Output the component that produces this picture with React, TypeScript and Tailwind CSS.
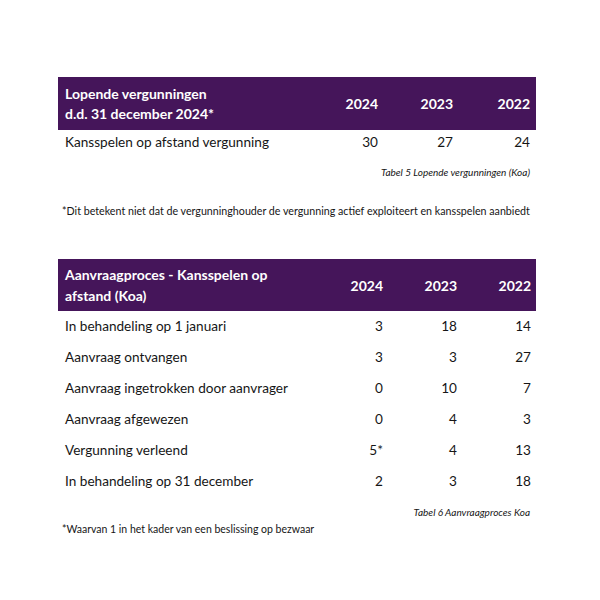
const rows2: [string, string, string, string][] = [
  ["In behandeling op 1 januari", "3", "18", "14"],
  ["Aanvraag ontvangen", "3", "3", "27"],
  ["Aanvraag ingetrokken door aanvrager", "0", "10", "7"],
  ["Aanvraag afgewezen", "0", "4", "3"],
  ["Vergunning verleend", "5*", "4", "13"],
  ["In behandeling op 31 december", "2", "3", "18"],
];

const App = () => {
  return (
    <div className="h-[600px] w-[600px] bg-white font-['Lato',sans-serif] text-[#161616]">
      <div className="ml-[58px] w-[478px] pt-[77px]">
        {/* Tabel 5 */}
        <div className="grid h-[53px] grid-cols-[1fr_70px_75px_77px] items-center bg-[#45155a] pl-[7px] pr-[6px] text-[14px] font-bold leading-[20px] text-white">
          <div>
            Lopende vergunningen
            <br />
            d.d. 31 december 2024*
          </div>
          <div className="text-right">2024</div>
          <div className="text-right">2023</div>
          <div className="text-right">2022</div>
        </div>
        <div className="grid h-[25px] grid-cols-[1fr_70px_75px_77px] items-center pl-[7px] pr-[6px] text-[13.6px]">
          <div>Kansspelen op afstand vergunning</div>
          <div className="text-right">30</div>
          <div className="text-right">27</div>
          <div className="text-right">24</div>
        </div>
        <div className="mt-[10px] pr-[6px] text-right text-[10px] italic">
          Tabel 5 Lopende vergunningen (Koa)
        </div>
        <div className="mt-[23px] pl-[4px] text-[10.7px]">
          *Dit betekent niet dat de vergunninghouder de vergunning actief exploiteert en kansspelen aanbiedt
        </div>

        {/* Tabel 6 */}
        <div className="mt-[40px] grid h-[52px] grid-cols-[1fr_70px_74px_74px] items-center bg-[#45155a] pl-[7px] pr-[5px] text-[14px] font-bold leading-[21px] text-white">
          <div>
            Aanvraagproces - Kansspelen op
            <br />
            afstand (Koa)
          </div>
          <div className="text-right">2024</div>
          <div className="text-right">2023</div>
          <div className="text-right">2022</div>
        </div>
        <div className="flex flex-col">
          {rows2.map((r) => (
            <div
              key={r[0]}
              className="grid h-[31px] grid-cols-[1fr_70px_74px_74px] items-center pl-[7px] pr-[5px] text-[13.6px]"
            >
              <div>{r[0]}</div>
              <div className="text-right">{r[1]}</div>
              <div className="text-right">{r[2]}</div>
              <div className="text-right">{r[3]}</div>
            </div>
          ))}
        </div>
        <div className="mt-[8px] pr-[6px] text-right text-[10px] italic">
          Tabel 6 Aanvraagproces Koa
        </div>
        <div className="mt-[2px] pl-[4px] text-[10.5px]">
          *Waarvan 1 in het kader van een beslissing op bezwaar
        </div>
      </div>
    </div>
  );
};

export default App;
